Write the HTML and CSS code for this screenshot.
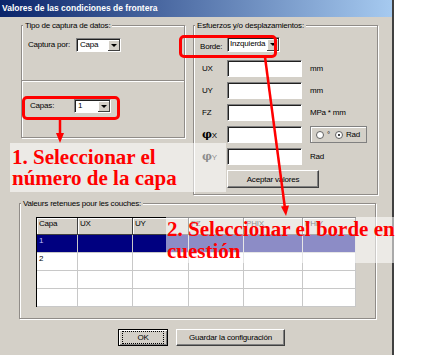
FILE: index.html
```html
<!DOCTYPE html>
<html lang="es">
<head>
  <meta charset="UTF-8" />
  <title>Valores de las condiciones de frontera</title>
  <link rel="stylesheet" href="styles.css">
</head>
<body>
  <div class="screen">
    <div class="dialog">
      <div class="titlebar">Valores de las condiciones de frontera</div>

      <div class="dialog-body">
        <div class="top-row">
          <!-- Tipo de captura -->
          <fieldset class="group capture">
            <legend>Tipo de captura de datos:</legend>
            <div class="capture-by">
              <span class="lbl lbl-capture">Captura por:</span>
              <div class="combo combo-capture">
                <span class="combo-value">Capa</span>
                <span class="combo-btn"></span>
              </div>
            </div>
            <div class="separator"></div>
            <div class="layers">
              <span class="lbl lbl-layers">Capas:</span>
              <div class="combo combo-layer">
                <span class="combo-value">1</span>
                <span class="combo-btn"></span>
              </div>
            </div>
          </fieldset>

          <!-- Esfuerzos -->
          <fieldset class="group loads">
            <legend>Esfuerzos y/o desplazamientos:</legend>
            <div class="load-grid">
              <span class="lbl lbl-edge">Borde:</span>
              <div class="combo combo-edge">
                <span class="combo-value">Inzquierda</span>
                <span class="combo-btn"></span>
              </div>
              <span></span>

              <span class="lbl">UX</span>
              <div class="input"></div>
              <span class="unit">mm</span>

              <span class="lbl">UY</span>
              <div class="input"></div>
              <span class="unit">mm</span>

              <span class="lbl">FZ</span>
              <div class="input"></div>
              <span class="unit">MPa * mm</span>

              <span class="lbl lbl-phi"><b>φ</b>X</span>
              <div class="input"></div>
              <div class="unit-toggle">
                <span class="radio"></span>
                <span class="radio-lbl">°</span>
                <span class="radio checked"></span>
                <span class="radio-lbl">Rad</span>
              </div>

              <span class="lbl lbl-phi"><b>φ</b>Y</span>
              <div class="input"></div>
              <span class="unit">Rad</span>

              <button class="btn btn-accept">Aceptar valores</button>
            </div>
          </fieldset>
        </div>

        <!-- Valores retenidos -->
        <fieldset class="group results">
          <legend>Valeurs retenues pour les couches:</legend>
          <table class="grid">
            <colgroup>
              <col style="width: 41px">
              <col style="width: 55px">
              <col style="width: 56px">
              <col style="width: 55px">
              <col style="width: 59px">
              <col style="width: 53px">
            </colgroup>
            <thead>
              <tr><th>Capa</th><th>UX</th><th>UY</th><th>FZ</th><th>PHIX</th><th>PHIY</th></tr>
            </thead>
            <tbody>
              <tr class="selected"><td>1</td><td></td><td></td><td></td><td></td><td></td></tr>
              <tr><td>2</td><td></td><td></td><td></td><td></td><td></td></tr>
              <tr><td></td><td></td><td></td><td></td><td></td><td></td></tr>
              <tr><td></td><td></td><td></td><td></td><td></td><td></td></tr>
            </tbody>
          </table>
        </fieldset>

        <div class="actions">
          <button class="btn btn-default"><span class="focus">OK</span></button>
          <button class="btn btn-save">Guardar la configuración</button>
        </div>
      </div>
    </div>

    <!-- Anotaciones -->
    <div class="note note-layer">1. Seleccionar el<br>número de la capa</div>
    <div class="note note-edge">2. Seleccionar el borde en<br>cuestión</div>
    <div class="mark mark-layer"></div>
    <div class="mark mark-edge"></div>
    <svg class="arrows" width="438" height="355" viewBox="0 0 438 355">
      <line x1="60" y1="119" x2="60" y2="134" stroke="#f00" stroke-width="2.5" />
      <polygon points="56,133 64,133 60,143" fill="#f00" />
      <line x1="265" y1="57" x2="284.8" y2="207" stroke="#f00" stroke-width="2.5" />
      <polygon points="289,205.6 281,206.6 286,216" fill="#f00" />
    </svg>
  </div>
</body>
</html>
```

FILE: styles.css
```css
html, body {
  margin: 0;
  padding: 0;
  background: #fff;
}

.screen {
  position: relative;
  width: 438px;
  height: 355px;
  overflow: hidden;
}

/* Ventana de dialogo */
.dialog {
  width: 392px;
  height: 355px;
  background: #d4d0c8;
  border-right: 2px solid #404040;
  font-family: "Liberation Sans", Arial, sans-serif;
  font-size: 8px;
  letter-spacing: -0.2px;
  color: #000;
}

.titlebar {
  height: 17px;
  line-height: 17px;
  padding-left: 2px;
  background: linear-gradient(to right, #0a246a, #a6caf0);
  color: #fff;
  font-weight: bold;
  font-size: 8.5px;
  letter-spacing: 0;
  white-space: nowrap;
}

.dialog-body {
  padding: 3px 0 0 19px;
}

.top-row {
  display: flex;
  align-items: flex-start;
  gap: 8px;
  margin-left: 2px;
}

/* Marcos de grupo */
.group {
  margin: 0;
  padding: 0;
  min-width: 0;
  border: 1px solid #908c88;
  box-shadow: inset 1px 1px 0 #fff, 1px 1px 0 #fff;
  box-sizing: border-box;
}

.group legend {
  padding: 0 2px;
  margin-left: 1px;
  line-height: 11px;
  background: #d4d0c8;
}

.capture {
  width: 164px;
  height: 118px;
}

.loads {
  width: 185px;
  height: 175px;
}

.lbl {
  white-space: nowrap;
}

.capture-by {
  display: flex;
  align-items: flex-start;
  height: 49px;
  padding: 7px 0 0 6px;
  box-sizing: border-box;
}

.lbl-capture {
  width: 48px;
  line-height: 14px;
}

.separator {
  border-top: 1px solid #908c88;
  border-bottom: 1px solid #fff;
}

.layers {
  display: flex;
  align-items: flex-start;
  padding: 17px 0 0 8px;
}

.lbl-layers {
  width: 44px;
  line-height: 14px;
}

/* Combos */
.combo {
  display: flex;
  height: 14px;
  background: #fff;
  border-top: 1px solid #808080;
  border-left: 1px solid #808080;
  border-right: 1px solid #fff;
  border-bottom: 1px solid #fff;
  box-shadow: inset 1px 1px 0 #202020;
  box-sizing: border-box;
}

.combo-value {
  flex: 1;
  padding-left: 3px;
  line-height: 12px;
  white-space: nowrap;
  overflow: hidden;
}

.combo-btn {
  position: relative;
  flex: none;
  width: 11px;
  background: #d4d0c8;
  border-right: 1px solid #404040;
  border-bottom: 1px solid #404040;
  box-shadow: inset 1px 1px 0 #fff;
  margin-top: 1px;
}

.combo-btn::after {
  content: "";
  position: absolute;
  left: 3px;
  top: 4px;
  border-left: 3px solid transparent;
  border-right: 3px solid transparent;
  border-top: 3px solid #000;
}

.combo-capture {
  width: 45px;
}

.combo-layer {
  width: 37px;
}

.combo-edge {
  width: 53px;
  height: 15px;
  margin-bottom: 3px;
}

.combo-edge .combo-value {
  padding-left: 2px;
}

/* Rejilla de esfuerzos */
.load-grid {
  display: grid;
  grid-template-columns: 27px 75px auto;
  row-gap: 5px;
  align-items: center;
  padding: 6px 0 0 6px;
}

.load-grid > .lbl {
  padding-left: 2px;
}

.load-grid > .lbl-edge {
  padding-left: 0;
}

.lbl-phi b {
  font-family: "DejaVu Serif", serif;
  font-size: 11px;
}

.input {
  height: 17px;
  background: #fff;
  border-top: 1px solid #808080;
  border-left: 1px solid #808080;
  border-right: 1px solid #fff;
  border-bottom: 1px solid #fff;
  box-shadow: inset 1px 1px 0 #202020;
  box-sizing: border-box;
}

.unit {
  padding-left: 8px;
  white-space: nowrap;
}

.unit-toggle {
  display: flex;
  align-items: center;
  gap: 3px;
  margin-left: 8px;
  width: 57px;
  height: 17px;
  padding-left: 5px;
  border: 1px solid #808080;
  box-shadow: inset 1px 1px 0 #fff;
  box-sizing: border-box;
}

.radio {
  width: 8px;
  height: 8px;
  border-radius: 50%;
  background: #fff;
  border: 1px solid #606060;
  box-sizing: border-box;
  position: relative;
}

.radio.checked::after {
  content: "";
  position: absolute;
  left: 2px;
  top: 2px;
  width: 2px;
  height: 2px;
  border-radius: 50%;
  background: #000;
}

.radio-lbl {
  margin-right: 2px;
}

/* Botones */
.btn {
  height: 18px;
  padding: 0;
  font: inherit;
  letter-spacing: inherit;
  color: #000;
  background: #d4d0c8;
  border: 1px solid;
  border-color: #fff #404040 #404040 #fff;
  box-shadow: inset -1px -1px 0 #808080;
  box-sizing: border-box;
}

.btn-accept {
  grid-column: 2 / span 2;
  justify-self: start;
  width: 92px;
}

.results {
  margin-top: 3px;
  width: 357px;
  height: 121px;
}

/* Tabla de resultados */
.grid {
  margin: 8px 0 0 16px;
  width: 319px;
  table-layout: fixed;
  border-collapse: separate;
  border-spacing: 0;
  background: #fff;
  border-top: 1px solid #000;
  border-left: 1px solid #000;
}

.grid th {
  height: 16px;
  padding: 0 2px;
  text-align: left;
  vertical-align: top;
  font-weight: normal;
  line-height: 12px;
  background: #d4d0c8;
  border-right: 1px solid #404040;
  border-bottom: 1px solid #404040;
  box-shadow: inset 1px 1px 0 #fff;
}

.grid td {
  height: 17px;
  padding: 0 2px;
  line-height: 12px;
  vertical-align: top;
  border-right: 1px solid #c8c8c8;
  border-bottom: 1px solid #c8c8c8;
}

.grid tr.selected td {
  background: #000080;
  color: #c0c0ff;
}

.actions {
  display: flex;
  gap: 8px;
  margin-top: 10px;
  padding-left: 99px;
}

.btn-default {
  width: 50px;
  height: 17px;
  border: 1px solid #000;
  box-shadow: inset 1px 1px 0 #fff, inset -1px -1px 0 #808080;
}

.btn-default .focus {
  display: block;
  margin: 0 3px;
  line-height: 11px;
  border: 1px dotted #000;
}

.btn-save {
  width: 109px;
  height: 17px;
}

/* Anotaciones rojas */
.note {
  position: absolute;
  background: rgba(255, 255, 255, 0.55);
  color: #f00;
  font-family: "Liberation Serif", "Times New Roman", serif;
  font-weight: bold;
  font-size: 21px;
  line-height: 21px;
  white-space: nowrap;
  box-sizing: border-box;
}

.note-layer {
  left: 10px;
  top: 143px;
  width: 216px;
  height: 49px;
  padding: 4px 0 0 2px;
}

.note-edge {
  left: 166px;
  top: 217px;
  width: 264px;
  height: 46px;
  padding: 1px 0 0 1px;
  line-height: 22px;
}

.mark {
  position: absolute;
  border: 3px solid #f00;
  border-radius: 5px;
  box-sizing: border-box;
}

.mark-layer {
  left: 22px;
  top: 96px;
  width: 98px;
  height: 24px;
}

.mark-edge {
  left: 179px;
  top: 35px;
  width: 98px;
  height: 23px;
}

.arrows {
  position: absolute;
  left: 0;
  top: 0;
  pointer-events: none;
}
```
